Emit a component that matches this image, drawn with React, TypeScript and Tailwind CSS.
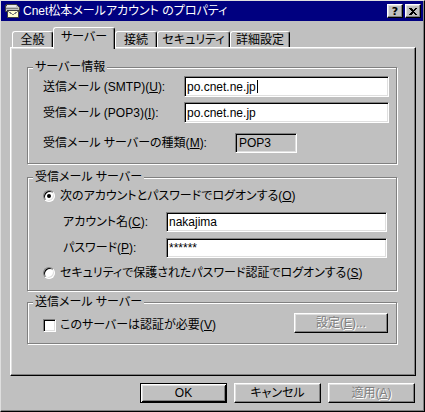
import React from "react";

const font = "font-['Liberation_Sans','Noto_Sans_CJK_JP',sans-serif] [font-feature-settings:'palt']";
const sunken =
  "border border-t-[#808080] border-l-[#808080] border-r-white border-b-white shadow-[inset_1px_1px_0_#000,inset_-1px_-1px_0_#dfdfdf]";
const raised =
  "border border-t-white border-l-white border-r-black border-b-black shadow-[inset_-1px_-1px_0_#808080,inset_1px_1px_0_#dfdfdf]";
const etched = "border border-[#808080] shadow-[inset_1px_1px_0_#fff,1px_1px_0_#fff]";
const disabledText = "text-[#808080] [text-shadow:1px_1px_0_#fff]";

const tabs = [
  { label: "全般", w: "w-[41px]" },
  { label: "サーバー", w: "w-[62px]", active: true },
  { label: "接続", w: "w-[42px]" },
  { label: "セキュリティ", w: "w-[73px]" },
  { label: "詳細設定", w: "w-[60px]" },
];

const TitleIcon = () => (
  <svg width="16" height="16" viewBox="0 0 16 16" shapeRendering="crispEdges">
    <polygon points="3,1 12,1 15,4 15,8 1,8 1,4" fill="#c0c0c0" stroke="#404040" />
    <rect x="3" y="2" width="9" height="2" fill="#e8e8e8" />
    <line x1="2" y1="5" x2="14" y2="5" stroke="#808080" />
    <rect x="3.5" y="7.5" width="11" height="7" fill="#ffffd0" stroke="#404040" />
    <polyline points="4,8 9,12 14,8" fill="none" stroke="#808080" />
  </svg>
);

const GroupBox = ({
  title,
  className,
  children,
}: {
  title: string;
  className: string;
  children: React.ReactNode;
}) => (
  <div className={`ml-[16px] w-[370px] ${etched} ${className}`}>
    <div className="-mt-[8px] ml-[5px] w-fit bg-[#c0c0c0] px-[2px] leading-[14px]">{title}</div>
    {children}
  </div>
);

const Radio = ({ checked }: { checked?: boolean }) => (
  <span className="flex h-[12px] w-[12px] items-center justify-center rounded-full border border-t-[#808080] border-l-[#808080] border-r-white border-b-white bg-white shadow-[inset_1px_1px_0_#000,inset_-1px_-1px_0_#dfdfdf]">
    {checked && <span className="h-[4px] w-[4px] rounded-full bg-black" />}
  </span>
);

export default function App() {
  return (
    <div
      className={`${font} flex h-[412px] w-[425px] flex-col overflow-hidden whitespace-nowrap border border-t-[#dfdfdf] border-l-[#dfdfdf] border-r-black border-b-black bg-[#c0c0c0] text-[12px] leading-[14px] text-black shadow-[inset_-1px_-1px_0_#808080]`}
    >
      {/* title bar */}
      <div className="mr-[1px] flex h-[20px] items-center bg-[#000080] pl-[3px] pr-[2px]">
        <TitleIcon />
        <span className="ml-[3px] text-white">Cnet松本メールアカウント のプロパティ</span>
        <div
          className={`ml-auto flex h-[14px] w-[16px] items-center justify-center bg-[#c0c0c0] ${raised} font-['DejaVu_Sans',sans-serif] text-[11px] font-bold leading-none`}
        >
          ?
        </div>
        <div className={`ml-[2px] flex h-[14px] w-[16px] items-center justify-center bg-[#c0c0c0] ${raised}`}>
          <svg width="8" height="7" viewBox="0 0 8 7" shapeRendering="crispEdges">
            <path d="M0 0h2l2 2 2-2h2L5 3.5 8 7H6L4 5 2 7H0l3-3.5z" fill="#000" />
          </svg>
        </div>
      </div>

      {/* tabs */}
      <div className="ml-[11px] mt-[6px] flex h-[20px] items-end">
        {tabs.map((t) =>
          t.active ? (
            <div
              key={t.label}
              className={`relative z-10 -mb-[2px] h-[22px] ${t.w} rounded-t-[3px] border-l border-t border-r border-l-white border-t-white border-r-black bg-[#c0c0c0] pt-[2px] text-center shadow-[inset_-1px_0_0_#808080]`}
            >
              {t.label}
            </div>
          ) : (
            <div
              key={t.label}
              className={`h-[16px] ${t.w} rounded-t-[3px] border-l border-t border-r border-l-white border-t-white border-r-black pt-[1px] text-center shadow-[inset_-1px_0_0_#808080]`}
            >
              {t.label}
            </div>
          )
        )}
      </div>

      {/* tab page */}
      <div className="ml-[9px] h-[329px] w-[406px] border border-t-white border-l-white border-r-black border-b-black shadow-[inset_-1px_-1px_0_#808080,inset_1px_1px_0_#dfdfdf]">
        <GroupBox title="サーバー情報" className="mt-[19px] h-[97px]">
          <div className="mt-[2px] flex items-center pl-[15px]">
            <span className="w-[141px]">
              送信メール (SMTP)(<u>U</u>):
            </span>
            <div className={`flex h-[21px] w-[205px] items-center bg-white px-[2px] ${sunken}`}>
              po.cnet.ne.jp<span className="ml-[1px] h-[13px] w-[1px] bg-black" />
            </div>
          </div>
          <div className="mt-[5px] flex items-center pl-[15px]">
            <span className="w-[141px]">
              受信メール (POP3)(<u>I</u>):
            </span>
            <div className={`flex h-[21px] w-[205px] items-center bg-white px-[2px] ${sunken}`}>po.cnet.ne.jp</div>
          </div>
          <div className="mt-[10px] flex items-center pl-[15px]">
            <span className="w-[192px]">
              受信メール サーバーの種類(<u>M</u>):
            </span>
            <div className={`flex h-[20px] w-[62px] items-center px-[3px] ${sunken}`}>POP3</div>
          </div>
        </GroupBox>

        <GroupBox title="受信メール サーバー" className="mt-[13px] h-[114px]">
          <div className="mt-[5px] flex h-[14px] items-center gap-[5px] pl-[15px]">
            <Radio checked />
            <span>
              次のアカウントとパスワードでログオンする(<u>O</u>)
            </span>
          </div>
          <div className="mt-[9px] flex items-center pl-[35px]">
            <span className="w-[103px]">
              アカウント名(<u>C</u>):
            </span>
            <div className={`flex h-[20px] w-[221px] items-center bg-white px-[2px] ${sunken}`}>nakajima</div>
          </div>
          <div className="mt-[6px] flex items-center pl-[35px]">
            <span className="w-[103px]">
              パスワード(<u>P</u>):
            </span>
            <div className={`flex h-[20px] w-[221px] items-center bg-white px-[2px] ${sunken}`}>******</div>
          </div>
          <div className="mt-[8px] flex h-[14px] items-center gap-[5px] pl-[15px]">
            <Radio />
            <span>
              セキュリティで保護されたパスワード認証でログオンする(<u>S</u>)
            </span>
          </div>
        </GroupBox>

        <GroupBox title="送信メール サーバー" className="mt-[11px] h-[42px]">
          <div className="mt-[4px] flex items-start pl-[15px] pr-[8px]">
            <div className="mt-[5px] flex h-[14px] items-center gap-[4px]">
              <span className={`h-[13px] w-[13px] bg-white ${sunken}`} />
              <span>
                このサーバーは認証が必要(<u>V</u>)
              </span>
            </div>
            <div className={`ml-auto flex h-[20px] w-[94px] items-center justify-center ${raised} ${disabledText}`}>
              設定(<u>E</u>)...
            </div>
          </div>
        </GroupBox>
      </div>

      {/* dialog buttons */}
      <div className="mt-[7px] flex justify-end gap-[7px] pr-[9px]">
        <div className="flex h-[20px] w-[87px] items-center justify-center border border-black shadow-[inset_1px_1px_0_#fff,inset_-1px_-1px_0_#000,inset_2px_2px_0_#dfdfdf,inset_-2px_-2px_0_#808080]">
          OK
        </div>
        <div className={`flex h-[20px] w-[87px] items-center justify-center ${raised}`}>キャンセル</div>
        <div className={`flex h-[20px] w-[87px] items-center justify-center ${raised} ${disabledText}`}>
          適用(<u>A</u>)
        </div>
      </div>
    </div>
  );
}
